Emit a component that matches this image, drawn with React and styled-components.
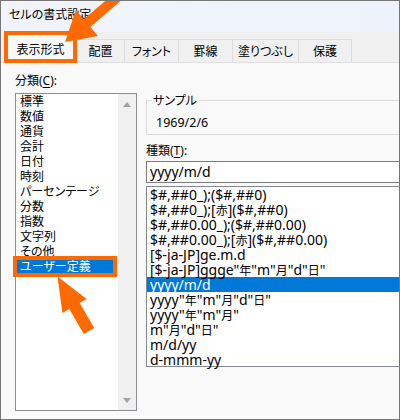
import React from "react";
import styled, { createGlobalStyle } from "styled-components";

const GlobalStyle = createGlobalStyle`
  body {
    margin: 0;
    font-family: "Noto Sans", "Noto Sans CJK JP", sans-serif;
    color: #000;
  }
`;

const ORANGE = "#ff6a00";
const BLUE = "#0078d7";

const Window = styled.div`
  position: relative;
  width: 400px;
  height: 420px;
  box-sizing: border-box;
  border: 1px solid #767676;
  background: #f9f9f9;
  overflow: hidden;
  font-size: 12px;
  font-feature-settings: "palt";
`;

const TitleBar = styled.div`
  height: 31px;
  box-sizing: border-box;
  padding: 6px 0 0 8px;
  line-height: 15px;
  background: linear-gradient(90deg, #f1f4fa, #edf2fc);
`;

const TabStrip = styled.div`
  display: flex;
  align-items: flex-end;
  height: 31px;
  box-sizing: border-box;
  padding-left: 3px;
  background: #f0f0f0;
  border-bottom: 1px solid #dfdfdf;
`;

const Tab = styled.div`
  display: flex;
  align-items: center;
  justify-content: center;
  box-sizing: border-box;
  width: ${(p) => p.$w}px;
  height: ${(p) => (p.$active ? 32 : 23)}px;
  line-height: 15px;
  background: ${(p) => (p.$active ? "#f9f9f9" : "#f0f0f0")};
  border-top: 1px solid #dcdcdc;
  border-right: 1px solid #dcdcdc;
  ${(p) =>
    p.$active &&
    `
    border: 4px solid ${ORANGE};
    padding-top: 4px;
    margin-bottom: -1px;
    position: relative;
    z-index: 1;
  `}
`;

const Body = styled.div`
  display: flex;
  gap: 9px;
  padding: 10px 0 0 14px;
`;

const Column = styled.div`
  display: flex;
  flex-direction: column;
  flex: none;
  width: ${(p) => p.$w}px;
  padding-top: ${(p) => p.$top || 0}px;
`;

const Label = styled.div`
  line-height: 15px;
  margin-top: ${(p) => p.$mt || 0}px;
  u {
    text-underline-offset: 2px;
  }
`;

const CategoryBox = styled.div`
  display: flex;
  margin-top: 5px;
  height: 318px;
  box-sizing: border-box;
  border: 1px solid #8c8d92;
  background: #fff;
`;

const CategoryItems = styled.div`
  flex: 1;
`;

const CategoryItem = styled.div`
  line-height: 15px;
  height: 15px;
  padding-left: 4px;
  ${(p) =>
    p.$selected &&
    `
    background: ${BLUE};
    color: #fff;
    margin-right: 4px;
    outline: 4px solid ${ORANGE};
    outline-offset: -1px;
  `}
`;

const Scrollbar = styled.div`
  display: flex;
  flex-direction: column;
  justify-content: space-between;
  align-items: center;
  width: 18px;
  padding: 8px 0 7px;
  box-sizing: border-box;
  background: #f0f0f0;
`;

const ScrollArrow = styled.div`
  width: 0;
  height: 0;
  border-left: 4px solid transparent;
  border-right: 4px solid transparent;
  ${(p) =>
    p.$down
      ? "border-top: 5px solid #a3a3a3;"
      : "border-bottom: 5px solid #a3a3a3;"}
`;

const GroupBox = styled.fieldset`
  margin: 0;
  padding: 7px 0 4px 9px;
  border: 1px solid #dcdcdc;
  min-inline-size: 0;
`;

const GroupLegend = styled.legend`
  margin-left: -4px;
  padding: 0 1px;
  line-height: 15px;
`;

const SampleValue = styled.div`
  line-height: 15px;
  font-size: 12.5px;
`;

const TypeInput = styled.div`
  margin-top: 3px;
  height: 22px;
  box-sizing: border-box;
  border: 1px solid #7a7a7a;
  background: #fff;
  padding-left: 3px;
  font-size: 14px;
  line-height: 20px;
`;

const FormatBox = styled.div`
  margin-top: 3px;
  height: 181px;
  box-sizing: border-box;
  border: 1px solid #828790;
  background: #fff;
  font-size: 14px;
`;

const FormatItem = styled.div`
  height: 15px;
  line-height: 15px;
  padding-left: 3px;
  white-space: nowrap;
  background: ${(p) => (p.$selected ? BLUE : "transparent")};
  color: ${(p) => (p.$selected ? "#fff" : "#000")};
`;

const Cjk = styled.span`
  font-size: 12px;
`;

const Overlay = styled.svg`
  position: absolute;
  top: -1px;
  left: -1px;
  pointer-events: none;
  z-index: 5;
`;

const tabs = [
  { label: "表示形式", w: 73, active: true },
  { label: "配置", w: 48 },
  { label: "フォント", w: 54 },
  { label: "罫線", w: 54 },
  { label: "塗りつぶし", w: 66 },
  { label: "保護", w: 53 },
];

const categories = [
  "標準",
  "数値",
  "通貨",
  "会計",
  "日付",
  "時刻",
  "パーセンテージ",
  "分数",
  "指数",
  "文字列",
  "その他",
  "ユーザー定義",
];

const formats = [
  "$#,##0_);($#,##0)",
  "$#,##0_);[赤]($#,##0)",
  "$#,##0.00_);($#,##0.00)",
  "$#,##0.00_);[赤]($#,##0.00)",
  "[$-ja-JP]ge.m.d",
  '[$-ja-JP]ggge"年"m"月"d"日"',
  "yyyy/m/d",
  'yyyy"年"m"月"d"日"',
  'yyyy"年"m"月"',
  'm"月"d"日"',
  "m/d/yy",
  "d-mmm-yy",
];

// split mixed text so the kanji get the smaller UI size
function renderMixed(text) {
  return text
    .split(/([\u3000-\u9fff]+)/)
    .filter(Boolean)
    .map((part, i) =>
      /[\u3000-\u9fff]/.test(part) ? <Cjk key={i}>{part}</Cjk> : part
    );
}

export default function App() {
  return (
    <>
      <GlobalStyle />
      <Window>
        <TitleBar>セルの書式設定</TitleBar>
        <TabStrip>
          {tabs.map((t) => (
            <Tab key={t.label} $w={t.w} $active={t.active}>
              {t.label}
            </Tab>
          ))}
        </TabStrip>
        <Body>
          <Column $w={122}>
            <Label>
              分類(<u>C</u>):
            </Label>
            <CategoryBox>
              <CategoryItems>
                {categories.map((c) => (
                  <CategoryItem key={c} $selected={c === "ユーザー定義"}>
                    {c}
                  </CategoryItem>
                ))}
              </CategoryItems>
              <Scrollbar>
                <ScrollArrow />
                <ScrollArrow $down />
              </Scrollbar>
            </CategoryBox>
          </Column>
          <Column $w={270} $top={20}>
            <GroupBox>
              <GroupLegend>サンプル</GroupLegend>
              <SampleValue>1969/2/6</SampleValue>
            </GroupBox>
            <Label $mt={8}>
              種類(<u>T</u>):
            </Label>
            <TypeInput>yyyy/m/d</TypeInput>
            <FormatBox>
              {formats.map((f) => (
                <FormatItem key={f} $selected={f === "yyyy/m/d"}>
                  {renderMixed(f)}
                </FormatItem>
              ))}
            </FormatBox>
          </Column>
        </Body>
        <Overlay width="400" height="420" viewBox="0 0 400 420">
          <polygon
            fill={ORANGE}
            points="65,42 98,36 90.3,26.9 135.9,-12.1 129.4,-19.7 83.8,19.3 76,10"
          />
          <polygon
            fill={ORANGE}
            points="57.5,276.5 86.6,299 79.7,303 94.2,328.1 83.8,334.1 69.3,309 62.4,313"
          />
        </Overlay>
      </Window>
    </>
  );
}
